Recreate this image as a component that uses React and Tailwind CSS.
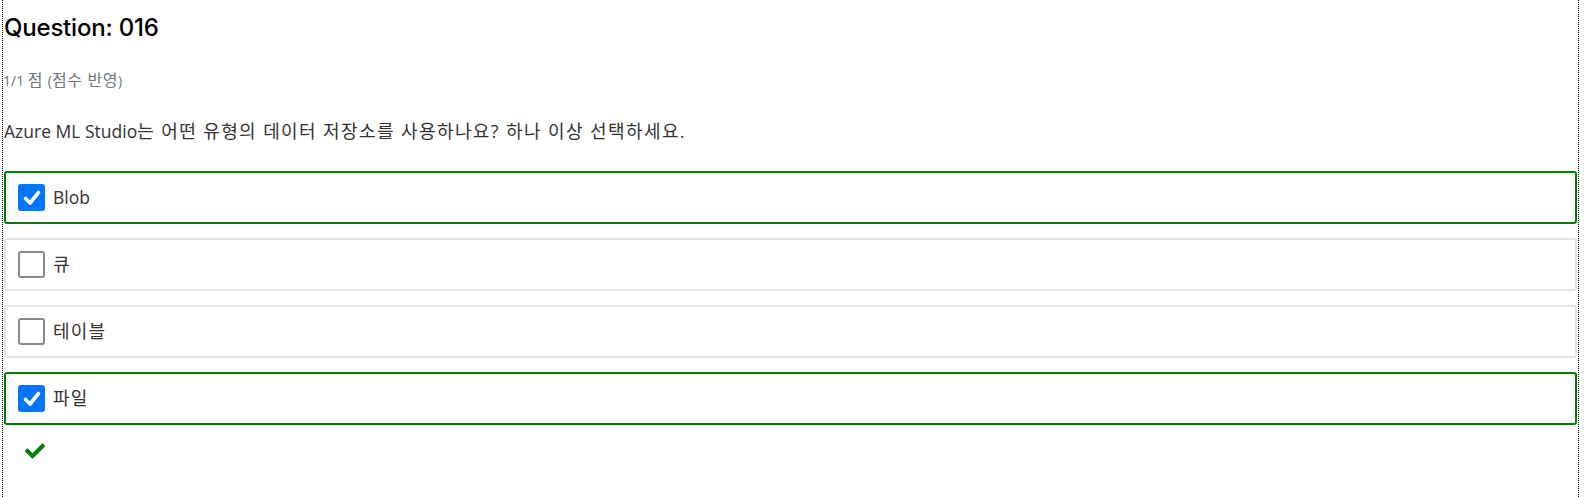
import { FaCheck } from 'react-icons/fa';

const OPTIONS = [
  { label: 'Blob', checked: true },
  { label: '큐', checked: false },
  { label: '테이블', checked: false },
  { label: '파일', checked: true },
];

// hangul runs get a bigger size so they take the width of the original Korean font
function Ko({ text, cls }) {
  const parts = text.split(/([\uAC00-\uD7A3][\uAC00-\uD7A3 ?.]*)/);
  return parts.map((p, i) =>
    /[\uAC00-\uD7A3]/.test(p) ? (
      <span key={i} className={cls}>{p}</span>
    ) : (
      <span key={i}>{p}</span>
    )
  );
}

function Box({ checked }) {
  if (checked) {
    return (
      <span className="flex items-center justify-center w-[27px] h-[27px] rounded-[3px] bg-[#0075ff]">
        <svg width="20" height="20" viewBox="0 0 20 20">
          <path d="M3.5 10.5 L8 15 L16.5 4.5" fill="none" stroke="white" strokeWidth="3.6" strokeLinecap="round" strokeLinejoin="round" />
        </svg>
      </span>
    );
  }
  return <span className="block w-[27px] h-[27px] rounded-[3px] border-2 border-[#8a8a8a] bg-white" />;
}

export default function App() {
  const body = { fontFamily: '"Open Sans", "Noto Sans CJK KR", sans-serif' };
  return (
    <div className="w-[1588px] h-[497px] bg-white">
      <div className="ml-[2px] w-[1577px] h-[497px] border-x border-dotted border-black pl-[1px] pr-[1px]" style={body}>
        <h2 className="pt-[13px] text-[24px] leading-[30px] font-medium text-black tracking-[-0.2px]" style={{ fontFamily: 'Inter, "Noto Sans", sans-serif' }}>
          Question: 016
        </h2>
        <p className="mt-[27px] h-[20px] text-[14px] leading-[20px] text-[#6c757d] -ml-[1px] whitespace-nowrap">
          <Ko text="1/1 점 (점수 반영)" cls="text-[16px] tracking-[0.6px]" />
        </p>
        <p className="mt-[29px] h-[24px] text-[17.5px] leading-[24px] text-[#333] whitespace-nowrap">
          <Ko text="Azure ML Studio는 어떤 유형의 데이터 저장소를 사용하나요? 하나 이상 선택하세요." cls="text-[18px] tracking-[1.4px]" />
        </p>
        <div className="mt-[28px] flex flex-col gap-[14px]">
          {OPTIONS.map((o) => (
            <div
              key={o.label}
              className={`flex items-center gap-[8px] h-[53px] pl-[12px] rounded-[3px] border-2 ${o.checked ? 'border-[#008000]' : 'border-[#e4e4e4]'}`}
            >
              <Box checked={o.checked} />
              <span className="text-[17.5px] text-[#333]">
                <Ko text={o.label} cls="text-[18px] tracking-[1.2px]" />
              </span>
            </div>
          ))}
        </div>
        <div className="mt-[16px] pl-[21px]">
          <FaCheck size={20} color="#008000" />
        </div>
      </div>
    </div>
  );
}
